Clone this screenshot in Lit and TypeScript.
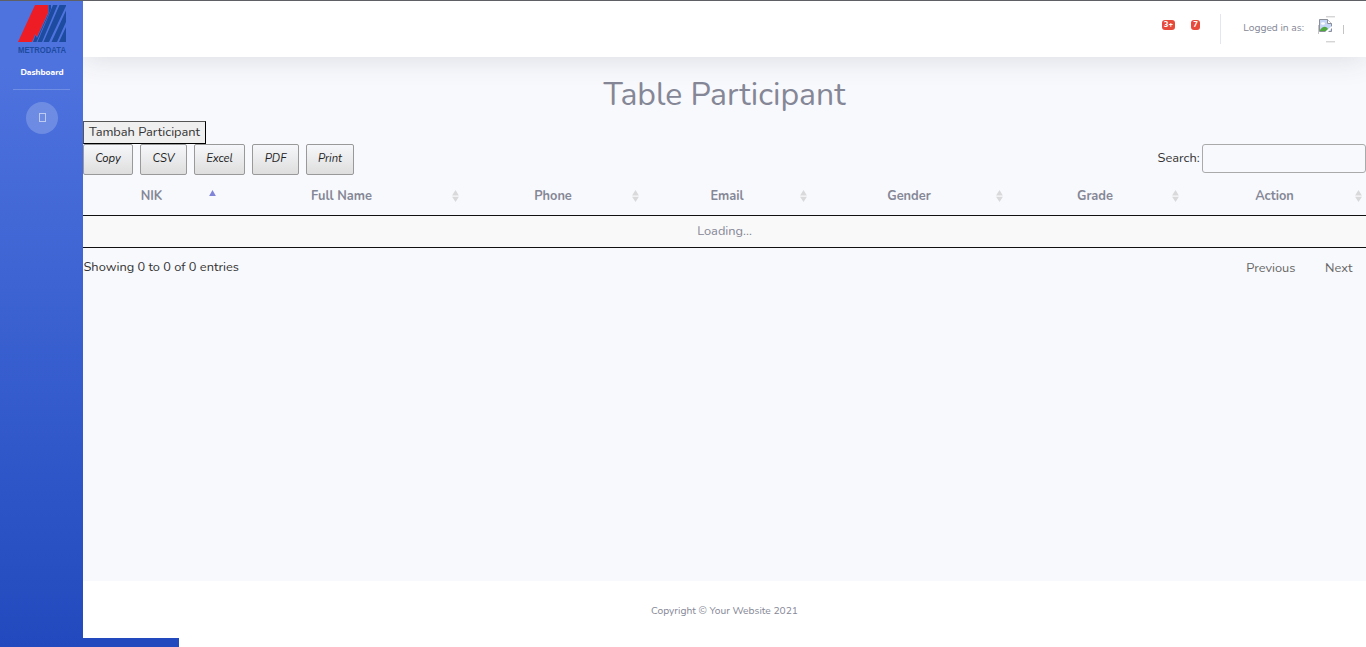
import { LitElement, html, css, svg } from "lit";
import { customElement } from "lit/decorators.js";

const COLUMNS = ["NIK", "Full Name", "Phone", "Email", "Gender", "Grade", "Action"];
const EXPORTS = ["Copy", "CSV", "Excel", "PDF", "Print"];

@customElement("app-sidebar")
class AppSidebar extends LitElement {
  static styles = css`
    :host { display: flex; flex-direction: column; align-items: center; width: 83px; height: 638px; color: #fff; }
    .logo { display: block; width: 52px; height: 54px; margin-top: 3px; margin-left: 1px; overflow: visible; }
    .brand { font: 700 9.3px "Liberation Sans", Arial, sans-serif; fill: #1d4b9f; }
    .link { font-weight: 800; font-size: 8.32px; line-height: 12px; margin-top: 9px; margin-left: 1px; }
    hr { width: 57px; height: 1px; margin: 10px 0 12px; border: 0; background: rgba(255,255,255,.2); }
    button { width: 32px; height: 32px; padding: 0; border: 0; border-radius: 50%; background: rgba(255,255,255,.2); display: flex; align-items: center; justify-content: center; }
    .glyph { box-sizing: border-box; width: 7px; height: 9px; margin: 0 0 1px 1px; border: 1px solid rgba(255,255,255,.55); }
  `;
  render() {
    return html`
      <svg class="logo" viewBox="-1 0 52 54">
        <path d="M1 38 18 1h13v8L20 33l-1.500-3L15 38z" fill="#ee1c25" />
        <path d="M31.500 1H34v4L19.500 38H16l2.500-7L20 34 31.500 9zM36 1h4.500L25 38h-4.500zM42.500 1H49v1L32 38h-5.500zM49 6.500v11.500L40 38h-5.500zM49 23V38h-7z" fill="#1d4b9f" />
        <text class="brand" x="1" y="49" textLength="48" lengthAdjust="spacingAndGlyphs">METRODATA</text>
      </svg>
      <div class="link">Dashboard</div>
      <hr />
      <button aria-label="Toggle"><span class="glyph"></span></button>
    `;
  }
}

@customElement("app-topbar")
class AppTopbar extends LitElement {
  static styles = css`
    :host { display: flex; align-items: center; justify-content: flex-end; box-sizing: border-box; padding-right: 22px; background: #fff; box-shadow: 0 2px 28px rgba(58,59,69,.15); }
    .badge { box-sizing: border-box; height: 10px; border-radius: 3px; background: #e74a3b; color: #fff; font-weight: 800; font-size: 7.68px; line-height: 10px; text-align: center; margin-bottom: 8px; }
    .alerts { width: 13.6px; margin-right: 15.7px; }
    .mail { width: 9.3px; margin-right: 20px; }
    .rule { width: 1px; height: 30px; background: #e3e6f0; margin-right: 22px; }
    .user { font-size: 10.24px; color: #858796; margin: -3px 13px 0 0; }
    .avatar { display: block; width: 27px; height: 27px; margin-top: 1px; }
  `;
  render() {
    return html`
      <span class="badge alerts">3+</span><span class="badge mail">7</span>
      <span class="rule"></span><span class="user">Logged in as:</span>
      <svg class="avatar" viewBox="0 0 27 27">
        <path d="M1.500 9v9M26.500 9v9M9 .8h9M9 25.800h9" stroke="#c4c4c4" fill="none" />
        <path d="M2.500 3.500h8l4 4v8h-12z" fill="#c5d5f5" stroke="#8a8f98" />
        <path d="M10.500 3.500v4h4" fill="#fff" stroke="#8a8f98" />
        <ellipse cx="6" cy="7.500" rx="2" ry="1.300" fill="#fff" />
        <path d="M3 15v-1c3-4 6-4 8-1l-2 2z" fill="#4fa83d" />
        <path d="m8 16 7-6v2l-4 4z" fill="#fff" />
      </svg>
    `;
  }
}

@customElement("participant-table")
class ParticipantTable extends LitElement {
  static styles = css`
    :host { display: block; height: 524px; font-size: 12.8px; color: #333; background: #f8f9fd; }
    h1 { margin: 0; padding-top: 18px; height: 46px; font-weight: 400; font-size: 32px; line-height: 40px; text-align: center; color: #858796; }
    .add { display: block; box-sizing: border-box; width: 123px; height: 23px; padding: 0; border: 1px solid #000; border-top-color: #555; border-left-color: #555; background: #efefef; color: #333; font: inherit; line-height: 19px; white-space: nowrap; }
    .tools { display: flex; justify-content: space-between; height: 33px; }
    .exports { display: flex; gap: 7px; }
    .exports button { box-sizing: border-box; height: 31px; padding: 0 0 3px; border: 1px solid #999; border-radius: 2px; background: linear-gradient(#f6f7fa, #dedede); color: #222; font: italic 11.264px Nunito, Lato, sans-serif; }
    .copy { width: 50px; } .csv { width: 47px; } .excel { width: 51px; } .pdf { width: 47px; } .print { width: 48px; }
    label { display: flex; gap: 2.4px; line-height: 28px; }
    input { box-sizing: border-box; width: 164px; height: 29px; border: 1px solid #aaa; border-radius: 3px; background: transparent; }
    table { width: 100%; table-layout: fixed; border-collapse: separate; border-spacing: 0; color: #858796; border-bottom: 1px solid #111; }
    th { height: 38px; padding: 0; border-bottom: 1px solid #111; font-weight: 700; }
    .head { display: grid; grid-template-columns: 1fr auto 1fr; align-items: center; }
    .sort { grid-column: 3; justify-self: end; width: 7px; height: 12px; margin-right: 4px; fill: #d9d9dc; }
    .name { grid-column: 2; }
    .asc { fill: #8084d8; }
    .nik { width: 137px; } .full-name { width: 243px; } .phone { width: 180px; } .email { width: 168px; } .gender { width: 196px; } .grade { width: 176px; } .action { width: 183px; }
    td { height: 30px; padding: 0 0 1px; text-align: center; background: #f9f9f9; }
    .foot { display: flex; justify-content: space-between; line-height: 18px; padding: 10px 13.5px 0 0.5px; }
    .pages { display: flex; gap: 29.6px; color: #666; margin-top: 1px; }
  `;
  render() {
    return html`
      <h1>Table Participant</h1>
      <button class="add">Tambah Participant</button>
      <div class="tools">
        <div class="exports">${EXPORTS.map((e) => html`<button class=${e.toLowerCase()}>${e}</button>`)}</div>
        <label>Search:<input type="search" /></label>
      </div>
      <table>
        <thead><tr>${COLUMNS.map((c, i) => html`<th class=${c.toLowerCase().replace(" ", "-")}><div class="head">
          <span class="name">${c}</span>
          <svg class="sort ${i === 0 ? "asc" : ""}" viewBox="0 0 7 12">
            ${i === 0 ? svg`<path d="M3.500 0 6.900 6H.1z" />` : svg`<path d="M3.500 0 6.900 5.500H.1zM.1 6.800h6.800L3.500 12z" />`}
          </svg></div></th>`)}</tr></thead>
        <tbody><tr><td colspan="7">Loading...</td></tr></tbody>
      </table>
      <div class="foot"><span>Showing 0 to 0 of 0 entries</span>
        <div class="pages"><span>Previous</span><span>Next</span></div></div>
    `;
  }
}

@customElement("app-root")
class AppRoot extends LitElement {
  static styles = css`
    :host { display: block; box-sizing: border-box; height: 647px; overflow: hidden; border-top: 1px solid #5f6065; background: #fff; font-family: Nunito, Lato, sans-serif; }
    .shell { display: grid; grid-template-columns: 83px 96px 1fr; grid-template-rows: 637px 9px; }
    .blue { grid-area: 1 / 1 / 3 / 2; background: linear-gradient(180deg, #4e73df 10%, #224abe 100%); }
    .tail { grid-area: 2 / 2; background: #224abe; }
    .main { grid-area: 1 / 2 / 2 / 4; display: flex; flex-direction: column; overflow: hidden; background: #fff; }
    app-topbar { position: relative; height: 56px; flex: none; }
    footer { flex: 1; display: flex; align-items: center; justify-content: center; padding-top: 3px; font-size: 10.24px; color: #858796; }
  `;
  render() {
    return html`<div class="shell">
      <div class="blue"><app-sidebar></app-sidebar></div>
      <div class="tail"></div>
      <div class="main">
        <app-topbar></app-topbar>
        <participant-table></participant-table>
        <footer>Copyright © Your Website 2021</footer>
      </div>
    </div>`;
  }
}
